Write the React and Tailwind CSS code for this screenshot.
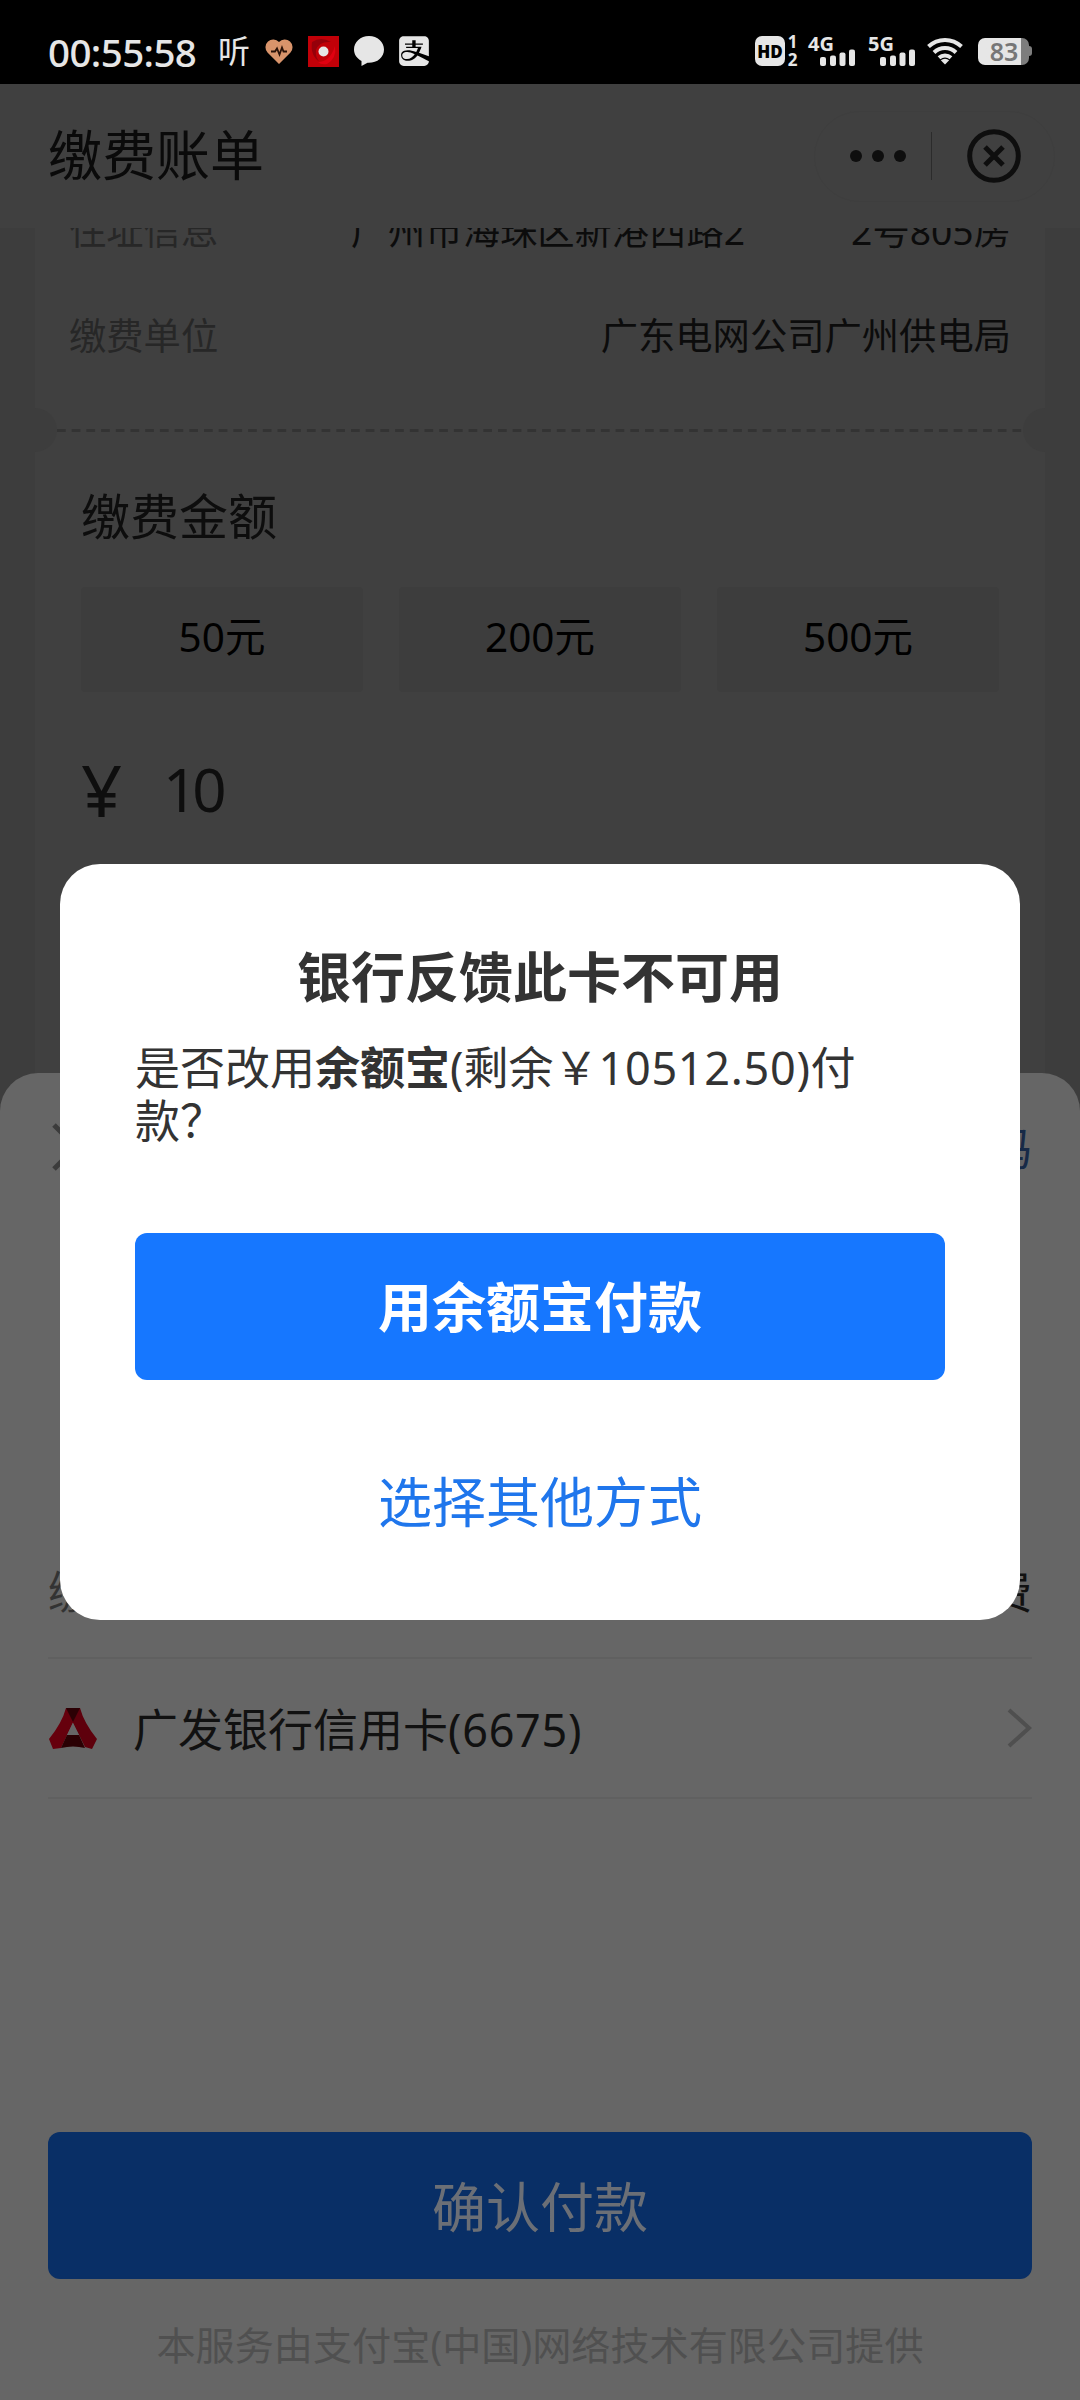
import React from "react";
import clsx from "clsx";
import { FaAlipay } from "react-icons/fa";

const amounts = ["50元", "200元", "500元"];

// --- Status bar pieces ---
const Signal = ({ label }) => (
  <div className="relative h-[30px] w-[48px]">
    <span className="absolute left-0 top-0 text-[20px] leading-[15px] font-bold">
      {label}
    </span>
    <svg
      viewBox="0 0 36 17"
      className="absolute bottom-0 left-[12px] h-[17px] w-[36px]"
      fill="currentColor"
    >
      <rect x="0" y="8" width="6" height="9" rx="2" />
      <rect x="10" y="6.5" width="6" height="10.5" rx="2" />
      <rect x="19.5" y="3.5" width="6" height="13.5" rx="2" />
      <rect x="29" y="0.5" width="6" height="16.5" rx="2" />
    </svg>
  </div>
);

const WifiIcon = () => (
  <svg
    viewBox="0 0 36 28"
    className="ml-[11px] h-[28px] w-[36px]"
    fill="none"
    stroke="currentColor"
    strokeWidth="4"
  >
    <path d="M1.500 9.500a24 24 0 0 1 33 0" />
    <path d="M7 15.500a16 16 0 0 1 22 0" />
    <path d="M12 20.800a9 9 0 0 1 12 0" />
    <path
      d="M18 27.500l-4.200-4.200a6.400 6.400 0 0 1 8.400 0z"
      fill="currentColor"
      stroke="none"
    />
  </svg>
);

const StatusBar = () => (
  <div className="flex h-[84px] items-start justify-between bg-black pl-[48px] pr-[48px] pt-[36px] text-[#e6e6e6]">
    <div className="flex h-[30px] items-center">
      <span className="w-[152px] pt-[2px] text-[38.500px] leading-[30px] font-medium tracking-[-0.600px] whitespace-nowrap">
        00:55:58
      </span>
      <span className="ml-[18px] w-[32px] text-[32px] leading-[30px]">听</span>
      <svg viewBox="0 0 28 25" className="ml-[15px] h-[25px] w-[28px]">
        <path
          d="M14 25L2.500 13.500A7.600 7.600 0 0 1 14 3a7.600 7.600 0 0 1 11.500 10.500z"
          fill="#d9946b"
        />
        <path
          d="M6 12.500h4l2-3 2.500 6 2.500-7 1.500 4h3.500"
          fill="none"
          stroke="#2a1208"
          strokeWidth="1.800"
        />
      </svg>
      <svg viewBox="0 0 31 31" className="ml-[15px] h-[31px] w-[31px]">
        <rect width="31" height="31" fill="#c10008" />
        <path d="M4 6q9-6 19 0q-12-1-15 8q-1 8 4 12q-10-6-8-20z" fill="#95000a" />
        <path d="M27 10q2 12-8 18q-6 1-9-2q12 0 17-16z" fill="#e00010" />
        <circle cx="15.500" cy="15.500" r="5" fill="#e6e6e6" />
      </svg>
      <svg
        viewBox="0 0 30 30"
        className="ml-[15px] h-[30px] w-[30px]"
        fill="currentColor"
      >
        <path d="M15 0C6.500 0 0 6 0 13.500c0 5 3 9 7.500 11.500v5l6-3.200C23 27.300 30 21.500 30 13.500 30 6 23.500 0 15 0z" />
      </svg>
      <FaAlipay className="ml-[15px] h-[34px] w-[30px]" />
    </div>

    <div className="flex h-[30px] items-center">
      <span className="flex h-[30px] w-[30px] items-center justify-center rounded-[7px] bg-[#e6e6e6] text-[17px] leading-none font-black text-black">
        HD
      </span>
      <span className="ml-[2px] mr-[10px] flex h-[32px] w-[11px] flex-col items-center justify-between text-[17px] leading-[14px] font-bold">
        <span>1</span>
        <span>2</span>
      </span>
      <Signal label="4G" />
      <span className="w-[12px]" />
      <Signal label="5G" />
      <WifiIcon />
      <div className="ml-[15px] flex items-center">
        <div className="flex h-[27px] w-[51px] items-center justify-center rounded-[7px] bg-linear-to-r from-[#e6e6e6] from-85% to-[#7d7d7d] to-85% pl-[1px] text-[25px] leading-none font-semibold text-[#777]">
          83
        </div>
        <div className="h-[10px] w-[3px] rounded-r-sm bg-[#7d7d7d]" />
      </div>
    </div>
  </div>
);

const Header = () => (
  <header className="flex h-[144px] items-center justify-between bg-[#404040] pl-[48px] pr-[25px]">
    <h1 className="pb-[3px] text-[54px] leading-[60px] text-[#0a0a0a]">
      缴费账单
    </h1>
    <div className="flex h-[91px] w-[241px] items-center rounded-full border border-[#3e3e3e] pl-[35px]">
      <div className="flex gap-[10px]">
        <i className="h-[12px] w-[12px] rounded-full bg-[#0e0e0e]" />
        <i className="h-[12px] w-[12px] rounded-full bg-[#0e0e0e]" />
        <i className="h-[12px] w-[12px] rounded-full bg-[#0e0e0e]" />
      </div>
      <div className="ml-[25px] h-[48px] w-px bg-[#2b2b2b]" />
      <svg
        viewBox="0 0 54 54"
        className="ml-[35px] h-[54px] w-[54px]"
        fill="none"
        stroke="#0e0e0e"
        strokeWidth="5"
      >
        <circle cx="27" cy="27" r="24.300" />
        <path d="M18 18l18 18M36 18L18 36" />
      </svg>
    </div>
  </header>
);

const BillRow = ({ label, children }) => (
  <div className="flex h-[105px] items-center justify-between px-[34px] text-[37.300px] leading-[40px]">
    <span className="text-[#272727]">{label}</span>
    <span className="text-[#0c0c0c]">{children}</span>
  </div>
);

const Bill = () => (
  <div className="mx-[35px] h-[860px] overflow-hidden bg-[#404040]">
    <div className="-mt-[50px]">
      <BillRow label="住址信息">
        广州市海珠区新港西路2<span className="inline-block w-[106px]" />
        2号805房
      </BillRow>
      <BillRow label="缴费单位">广东电网公司广州供电局</BillRow>
    </div>

    {/* ticket tear line */}
    <div className="mt-[20px] flex h-[44px] items-center justify-between">
      <div className="h-[44px] w-[22px] rounded-r-full bg-[#3d3d3d]" />
      <svg className="h-[3px] w-[966px]" viewBox="0 0 966 3">
        <path
          d="M0 1.500h966"
          stroke="#333"
          strokeWidth="3"
          strokeDasharray="8.700 6"
        />
      </svg>
      <div className="h-[44px] w-[22px] rounded-l-full bg-[#3d3d3d]" />
    </div>

    <div className="px-[46px] pt-[34px]">
      <h2 className="text-[49px] leading-[60px] text-[#0d0d0d]">缴费金额</h2>
      <div className="mt-[41px] grid grid-cols-3 gap-[36px]">
        {amounts.map((amount) => (
          <button
            key={amount}
            className="h-[105px] rounded-[4px] bg-[#3d3d3d] pb-[5px] text-[40.500px] leading-[50px] text-black"
          >
            {amount}
          </button>
        ))}
      </div>
      <div className="mt-[62px] flex h-[70px] items-center text-[#0e0e0e]">
        <span className="w-[82px] text-[72px] leading-[70px]">¥</span>
        <span className="text-[60px] leading-[70px] tracking-[-5px]">10</span>
      </div>
    </div>
  </div>
);

const GuangfaLogo = () => (
  <svg viewBox="0 0 50 43" className="h-[43px] w-[50px]">
    <path d="M18 1h14q4 15 17 31l-5 10-7-2-12-24z" fill="#5e000c" />
    <path d="M18 1l9 10-14 30-8 1-4-10Q14 16 18 1z" fill="#66000d" />
    <path d="M18 1h14l-7 14z" fill="#2b0004" />
    <path d="M19 28h12l6 13q-12-3-24 0z" fill="#2a0003" />
    <path d="M25 16l6 12H19z" fill="#666" />
  </svg>
);

const PaySheet = () => (
  <section className="absolute inset-x-0 bottom-0 flex h-[1327px] flex-col rounded-t-[38px] bg-[#666] px-[48px]">
    <div className="flex h-[148px] items-center justify-between">
      <svg
        viewBox="0 0 48 48"
        className="ml-[4px] h-[48px] w-[48px]"
        fill="none"
        stroke="#3c3c3c"
        strokeWidth="5"
      >
        <path d="M2 2l44 44M46 2L2 46" />
      </svg>
      <span className="pt-[4px] text-[45px] leading-[60px] text-[#172a47]">
        使用密码
      </span>
    </div>
    <div className="mt-[304px] flex h-[134px] items-center justify-between border-b-2 border-[#606060] pt-[2px] text-[45px]">
      <span className="text-[#333]">缴费说明</span>
      <span className="text-[#111]">电费缴费</span>
    </div>
    <div className="flex h-[140px] items-center border-b-2 border-[#606060]">
      <GuangfaLogo />
      <span className="ml-[35px] pt-[4px] text-[45px] text-[#111]">
        广发银行信用卡<span className="tracking-[0.700px]">(6675)</span>
      </span>
      <svg
        viewBox="0 0 25 42"
        className="ml-auto h-[42px] w-[25px]"
        fill="none"
        stroke="#4f4f4f"
        strokeWidth="4"
      >
        <path d="M2 3l20 18L2 39" />
      </svg>
    </div>
    <button className="mt-auto h-[147px] shrink-0 rounded-[12px] bg-[#092f66] pt-[3px] text-[54px] text-[#6b6f76]">
      确认付款
    </button>
    <p className="flex h-[121px] shrink-0 items-center justify-center pt-[11px] text-[39.150px] text-[#505050]">
      本服务由支付宝(中国)网络技术有限公司提供
    </p>
  </section>
);

const DialogButton = ({ primary, children }) => (
  <button
    className={clsx(
      "block h-[147px] w-full rounded-[12px] pt-[2px] text-[54px]",
      primary ? "bg-[#1677ff] font-bold text-white" : "text-[#1f76ec]"
    )}
  >
    {children}
  </button>
);

const CardDialog = () => (
  <div
    role="dialog"
    className="absolute left-[60px] top-[864px] h-[756px] w-[960px] rounded-[40px] bg-white px-[75px] pt-[81px] text-[#333]"
  >
    <h3 className="text-center text-[54px] leading-[64px] font-bold">
      银行反馈此卡不可用
    </h3>
    <p className="mt-[32px] text-[45px] leading-[53px]">
      是否改用<b>余额宝</b>(剩余￥
      <span className="tracking-[0.700px]">10512.50)</span>付
      <br />
      款？
    </p>
    <div className="mt-[86px] flex flex-col gap-[48px]">
      <DialogButton primary>用余额宝付款</DialogButton>
      <DialogButton>选择其他方式</DialogButton>
    </div>
  </div>
);

export default function App() {
  return (
    <div className="relative h-[2400px] w-[1080px] overflow-hidden bg-[#3d3d3d] font-['Noto_Sans','Noto_Sans_CJK_SC',sans-serif]">
      <StatusBar />
      <Header />
      <Bill />
      <PaySheet />
      <CardDialog />
    </div>
  );
}
